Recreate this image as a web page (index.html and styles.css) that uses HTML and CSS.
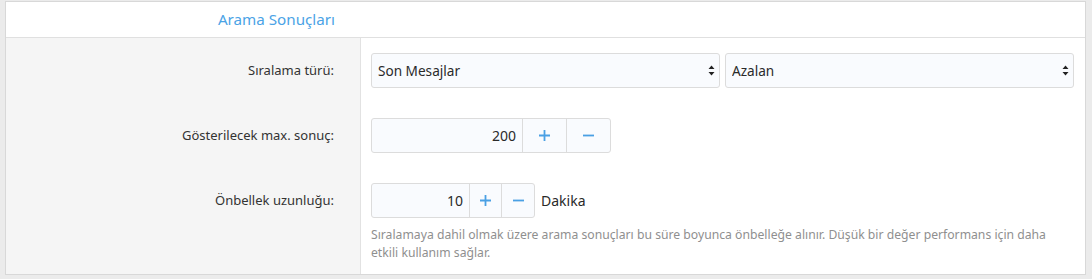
FILE: index.html
```html
<!DOCTYPE html>
<html lang="tr">
<head>
<meta charset="utf-8">
<title>Arama Sonuçları</title>
<link rel="stylesheet" href="styles.css">
</head>
<body>
<div class="panel">
  <div class="row head">
    <div class="label-cell"><span class="title">Arama Sonuçları</span></div>
    <div class="field-cell"></div>
  </div>
  <div class="row first">
    <div class="label-cell"><span class="label">Sıralama türü:</span></div>
    <div class="field-cell">
      <div class="selects">
        <div class="select-wrap">
          <select class="select"><option>Son Mesajlar</option></select>
          <svg class="arrows" width="7" height="11" viewBox="0 0 7 11"><path d="M3.5 0.5 L6.5 4 L0.5 4 Z M3.5 10.5 L6.5 7 L0.5 7 Z" fill="#222"/></svg>
        </div>
        <div class="select-wrap">
          <select class="select"><option>Azalan</option></select>
          <svg class="arrows" width="7" height="11" viewBox="0 0 7 11"><path d="M3.5 0.5 L6.5 4 L0.5 4 Z M3.5 10.5 L6.5 7 L0.5 7 Z" fill="#222"/></svg>
        </div>
      </div>
    </div>
  </div>
  <div class="row">
    <div class="label-cell"><span class="label">Gösterilecek max. sonuç:</span></div>
    <div class="field-cell">
      <div class="stepper wide">
        <div class="num">200</div>
        <div class="btn"><svg width="11" height="11" viewBox="0 0 11 11"><path d="M5.5 0V11M0 5.5H11" stroke="#4aa0e4" stroke-width="1.8"/></svg></div>
        <div class="btn"><svg width="11" height="11" viewBox="0 0 11 11"><path d="M0 5.5H11" stroke="#4aa0e4" stroke-width="1.8"/></svg></div>
      </div>
    </div>
  </div>
  <div class="row last">
    <div class="label-cell"><span class="label">Önbellek uzunluğu:</span></div>
    <div class="field-cell">
      <div class="inline">
        <div class="stepper narrow">
          <div class="num">10</div>
          <div class="btn"><svg width="11" height="11" viewBox="0 0 11 11"><path d="M5.5 0V11M0 5.5H11" stroke="#4aa0e4" stroke-width="1.8"/></svg></div>
          <div class="btn"><svg width="11" height="11" viewBox="0 0 11 11"><path d="M0 5.5H11" stroke="#4aa0e4" stroke-width="1.8"/></svg></div>
        </div>
        <span class="unit">Dakika</span>
      </div>
      <p class="help">Sıralamaya dahil olmak üzere arama sonuçları bu süre boyunca önbelleğe alınır. Düşük bir değer performans için daha etkili kullanım sağlar.</p>
    </div>
  </div>
</div>
</body>
</html>
```
FILE: styles.css
```css
html, body {
  margin: 0;
  padding: 0;
}
body {
  background: #ebebeb;
  font-family: "Noto Sans", "Open Sans", sans-serif;
  color: #2a2a2a;
  height: 279px;
  padding-top: 1px;
  box-sizing: border-box;
}
.panel {
  margin-left: 5px;
  width: 1081px;
  box-sizing: border-box;
  border: 1px solid #d8d8d8;
  background: #fff;
}
.row {
  display: grid;
  grid-template-columns: 355px 1fr;
}
.label-cell {
  background: #f5f5f5;
  border-right: 1px solid #e2e2e2;
  text-align: right;
  padding: 15px 26px 15px 0;
}
.field-cell {
  padding: 15px 11px 15px 10px;
}
.head {
  border-bottom: 1px solid #e0e0e0;
  height: 35px;
}
.head .label-cell,
.head .field-cell {
  background: #fff;
  border-right: none;
  padding: 0 26px 0 0;
}
.title {
  display: block;
  line-height: 35px;
  font-size: 15.2px;
  color: #4ba3e6;
}
.label {
  display: block;
  line-height: 34px;
  font-size: 13px;
  color: #333;
}
.selects {
  display: flex;
  gap: 5px;
}
.select-wrap {
  position: relative;
  flex: 1;
}
.select {
  appearance: none;
  -webkit-appearance: none;
  width: 100%;
  height: 35px;
  box-sizing: border-box;
  border: 1px solid #dcdcdc;
  border-radius: 3px;
  background: #f9fbfe;
  font-family: inherit;
  font-size: 13.6px;
  color: #2a2a2a;
  padding: 0 6px;
  outline: none;
}
.arrows {
  position: absolute;
  right: 5px;
  top: 12px;
}
.stepper {
  display: flex;
  height: 35px;
  box-sizing: border-box;
  border: 1px solid #dcdcdc;
  border-radius: 3px;
  background: #f9fbfe;
}
.stepper.wide { width: 240px; }
.stepper.narrow { width: 164px; }
.num {
  flex: 1;
  text-align: right;
  line-height: 33px;
  font-size: 14px;
  padding-right: 6px;
  border-right: 1px solid #dcdcdc;
}
.btn {
  display: flex;
  align-items: center;
  justify-content: center;
  border-right: 1px solid #dcdcdc;
}
.btn:last-child { border-right: none; }
.wide .btn { width: 43px; }
.narrow .btn { width: 31px; }
.narrow .btn:last-child { width: 32px; }
.inline {
  display: flex;
  align-items: center;
  gap: 6px;
}
.unit {
  font-size: 14px;
}
.help {
  margin: 8px 0 0;
  font-size: 12.2px;
  line-height: 18px;
  color: #8f8f8f;
  max-width: 690px;
}
.last .field-cell { padding-bottom: 12px; }
```
